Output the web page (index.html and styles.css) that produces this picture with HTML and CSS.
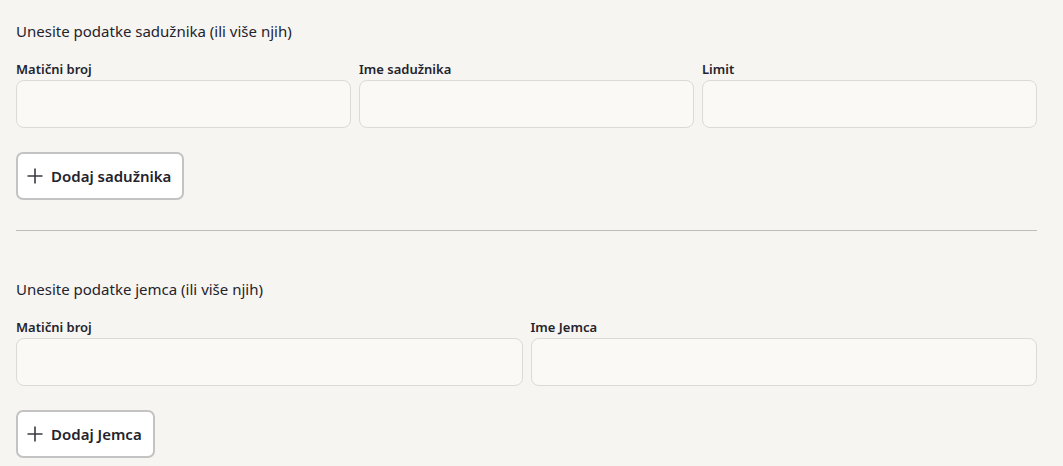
FILE: index.html
```html
<!DOCTYPE html>
<html lang="hr">

<head>
    <meta charset="UTF-8" />
    <meta name="viewport" content="width=device-width, initial-scale=1.0" />
    <title>Sadužnici i jemci</title>
    <link rel="stylesheet" href="styles.css">
</head>

<body>
    <div class="form-container">
        <div class="form-section">
            <p class="section-title">Unesite podatke sadužnika (ili više njih)</p>
            <div class="field-row three">
                <div class="field">
                    <label for="coMaticni">Matični broj</label>
                    <input type="text" id="coMaticni" />
                </div>
                <div class="field">
                    <label for="coIme">Ime sadužnika</label>
                    <input type="text" id="coIme" />
                </div>
                <div class="field">
                    <label for="coLimit">Limit</label>
                    <input type="text" id="coLimit" />
                </div>
            </div>
            <button class="add-button">
                <svg width="16" height="16" viewBox="0 0 16 16">
                    <path d="M8 0.5v15M0.5 8h15" stroke="#3a3a42" stroke-width="1.6" fill="none" />
                </svg>
                Dodaj sadužnika
            </button>
        </div>

        <hr class="divider" />

        <div class="form-section second">
            <p class="section-title">Unesite podatke jemca (ili više njih)</p>
            <div class="field-row two">
                <div class="field">
                    <label for="jMaticni">Matični broj</label>
                    <input type="text" id="jMaticni" />
                </div>
                <div class="field">
                    <label for="jIme">Ime Jemca</label>
                    <input type="text" id="jIme" />
                </div>
            </div>
            <button class="add-button">
                <svg width="16" height="16" viewBox="0 0 16 16">
                    <path d="M8 0.5v15M0.5 8h15" stroke="#3a3a42" stroke-width="1.6" fill="none" />
                </svg>
                Dodaj Jemca
            </button>
        </div>
    </div>
</body>

</html>
```

FILE: styles.css
```css
body {
    margin: 0;
    background-color: #f6f5f1;
    font-family: "Noto Sans", Lato, sans-serif;
    color: #24232d;
}

.form-container {
    padding: 20px 26px 0 16px;
}

.section-title {
    margin: 0 0 18px 0;
    font-size: 15px;
    line-height: 22px;
}

.field-row {
    display: grid;
    gap: 8px;
}

.field-row.three {
    grid-template-columns: 1fr 1fr 1fr;
}

.field-row.two {
    grid-template-columns: 1fr 1fr;
}

.field label {
    display: block;
    font-size: 13px;
    font-weight: 600;
    line-height: 18px;
    margin-bottom: 2px;
}

.field input {
    display: block;
    box-sizing: border-box;
    width: 100%;
    height: 48px;
    background-color: #faf9f6;
    border: 1px solid #dcdad6;
    border-radius: 8px;
    padding: 0 12px;
    font-family: inherit;
    font-size: 15px;
}

.add-button {
    display: flex;
    align-items: center;
    gap: 8px;
    box-sizing: border-box;
    height: 48px;
    margin-top: 24px;
    padding: 0 11px 0 9px;
    background-color: #ffffff;
    border: 2px solid #c3c3c3;
    border-radius: 7px;
    font-family: inherit;
    font-size: 15px;
    font-weight: 600;
    color: #24232d;
    cursor: pointer;
}

.divider {
    margin: 30px 0 0 0;
    border: none;
    border-top: 1px solid #bdbcb8;
}

.form-section.second {
    padding-top: 47px;
}
```
